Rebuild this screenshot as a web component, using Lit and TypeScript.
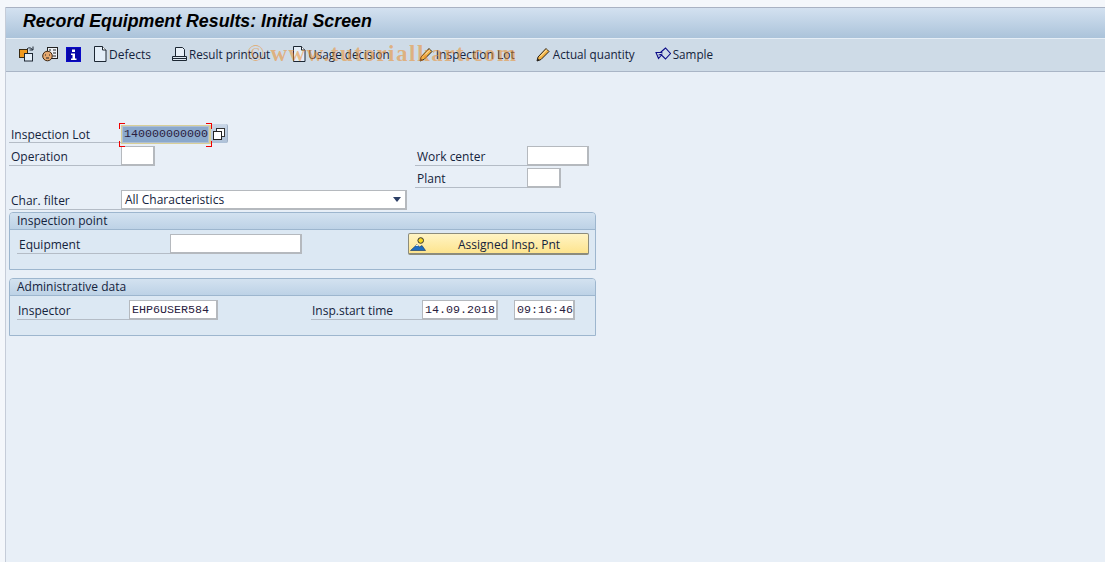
import { LitElement, html, css, svg } from "lit";
import { customElement } from "lit/decorators.js";

const pageIcon = svg`<svg class="ic" width="14" height="16" viewBox="0 0 14 16"><path d="M1.5.5h8l3.500 3.500v11.500h-11.500z" fill="#e4eef8" stroke="#1c2733"/><path d="M9.500.5v3.500h3.500" fill="#fff" stroke="#1c2733"/></svg>`;
const pencil = svg`<svg class="ic" width="15" height="15" viewBox="0 0 15 15"><path d="M1 14l1-4 8-8.500 3 3-8 8z" fill="#f3b343" stroke="#2a2118"/><path d="M4 9.500l7-7" stroke="#fff3c8" fill="none"/><path d="M1 14l.7-2.800 2 2z" fill="#222"/></svg>`;

@customElement("app-root")
export class AppRoot extends LitElement {
  static styles = css`
    :host {
      display: block;
      width: 1105px;
      height: 562px;
      position: relative;
      overflow: hidden;
      background: #f4f7fb;
      font-family: "Open Sans", "Liberation Sans", sans-serif;
      font-size: 12px;
      color: #14233c;
    }
    .window {
      margin: 7px 0 0 5px;
      height: 555px;
      border-left: 1px solid #c5ccd8;
      display: flex;
      flex-direction: column;
      background: #e8eff7;
    }
    .title {
      height: 31px;
      box-sizing: border-box;
      border-top: 1px solid #a9b2c3;
      background: linear-gradient(#d3e1f0, #abc3da);
      display: flex;
      align-items: center;
      padding: 0 0 3px 17px;
      font: italic bold 17.800px "Liberation Sans", sans-serif;
      color: #000;
      flex: none;
    }
    .toolbar {
      height: 34px;
      box-sizing: border-box;
      border-top: 1px solid #e6eef6;
      border-bottom: 1px solid #a9b5c6;
      background: #cedbe7;
      display: flex;
      align-items: center;
      padding: 0 0 2px 13px;
      flex: none;
      font-size: 11.700px;
    }
    .tb { display: flex; align-items: center; gap: 2px; white-space: nowrap; }
    .wide { font-size: 12px; }
    .ic { display: block; flex: none; }
    .body { padding: 52px 0 0 3px; }
    .row { display: flex; height: 20px; margin-bottom: 2px; }
    .label {
      box-sizing: border-box;
      height: 20px;
      border-bottom: 1px solid #b4bcc6;
      padding: 2px 0 0 2px;
      line-height: 17px;
      white-space: nowrap;
    }
    .tight { padding-left: 1px; }
    .input {
      box-sizing: border-box;
      height: 20px;
      background: #fff;
      border: 1px solid #b5b9be;
      border-bottom-width: 2px;
      border-right-width: 2px;
      font: 11.670px/18px "Liberation Mono", monospace;
      color: #2a2040;
      padding-left: 2px;
      white-space: nowrap;
    }
    .lot {
      position: relative;
      width: 90px;
      height: 19px;
      margin-top: 1px;
      line-height: 17px;
      background: #8aa8cc;
      border: 1px solid #d8cf98;
      border-right-width: 2px;
      box-shadow: inset 0 0 0 1px #aebfd4;
    }
    .corner { position: absolute; width: 5px; height: 5px; border: 0 solid #f00000; }
    .tl { left: -3px; top: -3px; border-width: 1px 0 0 1px; }
    .tr { right: -3px; top: -3px; border-width: 1px 1px 0 0; }
    .bl { left: -3px; bottom: -4px; border-width: 0 0 1px 1px; }
    .br { right: -3px; bottom: -4px; border-width: 0 1px 1px 0; }
    .f4 {
      width: 17px;
      height: 19px;
      box-sizing: border-box;
      background: linear-gradient(#c9d6e6, #aec1d8);
      border-radius: 0 2px 2px 0;
      display: flex;
      align-items: center;
      justify-content: center;
      border-right: 1px solid #9fb0c5;
    }
    .select {
      box-sizing: border-box;
      width: 286px;
      height: 20px;
      background: #fff;
      border: 1px solid #b5b9be;
      border-bottom-width: 2px;
      border-right-width: 2px;
      display: flex;
      justify-content: space-between;
      align-items: center;
      padding: 0 3px;
    }
    .arrow { width: 0; height: 0; border: 4.500px solid transparent; border-top: 5px solid #2c3f66; border-bottom: 0; margin-right: 1px; }
    .group {
      box-sizing: border-box;
      width: 587px;
      height: 58px;
      margin-bottom: 8px;
      border: 1px solid #9db6ce;
      border-radius: 4px 4px 0 0;
      background: #dce8f3;
    }
    .ghead {
      height: 17px;
      box-sizing: border-box;
      border-bottom: 1px solid #9db6ce;
      background: linear-gradient(#d3e2f0, #bdd2e6);
      padding-left: 7px;
      line-height: 16px;
      border-radius: 3px 3px 0 0;
    }
    .gbody { display: flex; padding: 4px 0 0 7px; align-items: flex-start; }
    .btn {
      box-sizing: border-box;
      width: 181px;
      height: 22px;
      margin-top: -1px;
      border: 1px solid #8c8c7c;
      border-bottom-width: 2px;
      border-radius: 2px;
      background: linear-gradient(#fff4c4, #fde48e);
      display: flex;
      align-items: center;
      position: relative;
      padding-left: 1px;
    }
    .btn span { position: absolute; left: 49px; top: 2px; line-height: 17px; }
    .mark {
      position: absolute;
      left: 247px;
      top: 41px;
      font: bold 23px "Liberation Serif", serif;
      letter-spacing: 1.500px;
      color: rgba(236, 140, 40, 0.55);
      white-space: nowrap;
      pointer-events: none;
    }
    .mark i { font-style: normal; font-weight: 400; letter-spacing: 0; margin-right: 6px; }
  `;

  render() {
    return html`
      <div class="window">
        <div class="title">Record Equipment Results: Initial Screen</div>
        <div class="toolbar">
          <svg class="ic" width="16" height="16" viewBox="0 0 16 16" style="margin-right:7px"><rect x=".5" y="3.500" width="8" height="8" fill="#f09a20" stroke="#3a2a10"/><rect x="5.500" y="7.500" width="8" height="7.500" fill="#e4eef8" stroke="#1c2733"/><path d="M8 3a3.200 3.200 0 0 1 5.500 1M14 .5v3.500h-3.500" fill="none" stroke="#1c2733"/></svg>
          <svg class="ic" width="16" height="16" viewBox="0 0 16 16" style="margin-right:8px"><rect x="5.500" y="1.500" width="10" height="11" fill="#eef2f6" stroke="#222"/><path d="M7 4h2M11 4h3M7 7h2M11 7h3M11 10h3" stroke="#222"/><circle cx="5.500" cy="10" r="4.800" fill="#e5a870" stroke="#3a2410"/><path d="M3 9h1M7 9h1M4 12h3" stroke="#222"/></svg>
          <svg class="ic" width="15" height="15" viewBox="0 0 15 15" style="margin-right:12px"><rect width="15" height="15" fill="#0a0ac8"/><rect x="1" y="1" width="13" height="13" fill="#0808a8"/><path d="M6 2.500h3v2.500h-3zM5 6.500h4v5h1.500v1.500h-5.500v-1.500h1.500v-3.500h-1.500z" fill="#fff"/></svg>
          <div class="tb wide" style="margin-right:21px">${pageIcon}Defects</div>
          <div class="tb" style="margin-right:22px">
            <svg class="ic" width="15" height="15" viewBox="0 0 15 15"><path d="M3.500.5h7l2 2v7h-9z" fill="#e8f0f8" stroke="#1c2733"/><path d="M.5 9.500h14v4h-14z" fill="#dfe8f0" stroke="#1c2733"/><path d="M1 11.500h13" stroke="#1c2733"/></svg>Result printout
          </div>
          <div class="tb" style="margin-right:29px">${pageIcon}Usage decision</div>
          <div class="tb wide" style="margin-right:21px">${pencil}Inspection Lot</div>
          <div class="tb" style="margin-right:20px">${pencil}Actual quantity</div>
          <div class="tb">
            <svg class="ic" width="16" height="14" viewBox="0 0 16 14"><path d="M6 5L10.500 1l5 5.500-5 5.500-4-4-3 3.500-2.500-6h5.500z" fill="none" stroke="#0a0a88" stroke-width="1.100"/><path d="M3.500 8l4-1" stroke="#0a0a88" fill="none"/></svg>Sample
          </div>
        </div>
        <div class="body">
          <div class="row">
            <div class="label" style="width:112px;height:19px">Inspection Lot</div>
            <div class="input lot">140000000000<i class="corner tl"></i><i class="corner tr"></i><i class="corner bl"></i><i class="corner br"></i></div>
            <div class="f4"><svg width="12" height="12" viewBox="0 0 12 12"><rect x="3.500" y=".5" width="8" height="8" fill="#fff" stroke="#333"/><rect x=".5" y="3.500" width="8" height="8" fill="#fff" stroke="#222"/></svg></div>
          </div>
          <div class="row">
            <div class="label" style="width:112px">Operation</div>
            <div class="input" style="width:34px"></div>
            <div style="width:260px"></div>
            <div class="label" style="width:112px">Work center</div>
            <div class="input" style="width:62px"></div>
          </div>
          <div class="row">
            <div style="width:406px"></div>
            <div class="label" style="width:112px">Plant</div>
            <div class="input" style="width:34px"></div>
          </div>
          <div class="row">
            <div class="label" style="width:112px">Char. filter</div>
            <div class="select">All Characteristics<i class="arrow"></i></div>
          </div>
          <div class="group">
            <div class="ghead">Inspection point</div>
            <div class="gbody">
              <div class="label" style="width:153px">Equipment</div>
              <div class="input" style="width:132px"></div>
              <div style="width:106px"></div>
              <div class="btn">
                <svg class="ic" width="16" height="16" viewBox="0 0 16 16"><circle cx="10.700" cy="4.500" r="2.800" fill="#f8d820" stroke="#333"/><path d="M.5 14.500l6.500-6 2.500 2.500 2.500-1.500 3.500 5z" fill="#1e6cc0" stroke="#10305a" stroke-width=".6"/><path d="M5.500 10l1.500-1.500 1.500 1.500z" fill="#fff"/></svg>
                <span>Assigned Insp. Pnt</span>
              </div>
            </div>
          </div>
          <div class="group">
            <div class="ghead">Administrative data</div>
            <div class="gbody">
              <div class="label tight" style="width:112px">Inspector</div>
              <div class="input" style="width:89px">EHP6USER584</div>
              <div style="width:93px"></div>
              <div class="label tight" style="width:111px">Insp.start time</div>
              <div class="input" style="width:76px">14.09.2018</div>
              <div style="width:16px"></div>
              <div class="input" style="width:61px">09:16:46</div>
            </div>
          </div>
        </div>
      </div>
      <div class="mark"><i>©</i>www.tutorialkart.com</div>
    `;
  }
}
